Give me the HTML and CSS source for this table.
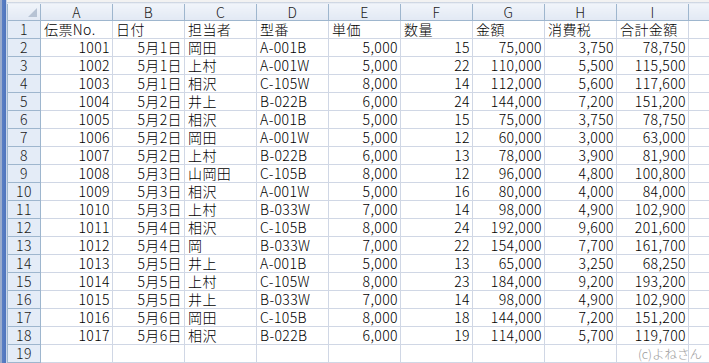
FILE: index.html
```html
<!DOCTYPE html>
<html lang="ja">
<head>
<meta charset="utf-8">
<link rel="stylesheet" href="styles.css">
</head>
<body>
<div class="window">
  <div class="edge"></div>
  <div class="main">
    <div class="topline"></div>
    <table class="sheet">
      <colgroup>
        <col class="c-rh"><col class="c"><col class="c"><col class="c"><col class="c"><col class="c"><col class="c"><col class="c"><col class="c"><col class="c"><col class="c-j">
      </colgroup>
      <thead>
        <tr class="colhead">
          <th class="corner"><span class="tri"></span></th>
          <th>A</th><th>B</th><th>C</th><th>D</th><th>E</th><th>F</th><th>G</th><th>H</th><th>I</th><th></th>
        </tr>
      </thead>
      <tbody>
        <tr><th>1</th><td>伝票No.</td><td>日付</td><td>担当者</td><td>型番</td><td>単価</td><td>数量</td><td>金額</td><td>消費税</td><td>合計金額</td><td></td></tr>
        <tr><th>2</th><td class="r">1001</td><td class="r">5月1日</td><td>岡田</td><td>A-001B</td><td class="r">5,000</td><td class="r">15</td><td class="r">75,000</td><td class="r">3,750</td><td class="r">78,750</td><td></td></tr>
        <tr><th>3</th><td class="r">1002</td><td class="r">5月1日</td><td>上村</td><td>A-001W</td><td class="r">5,000</td><td class="r">22</td><td class="r">110,000</td><td class="r">5,500</td><td class="r">115,500</td><td></td></tr>
        <tr><th>4</th><td class="r">1003</td><td class="r">5月1日</td><td>相沢</td><td>C-105W</td><td class="r">8,000</td><td class="r">14</td><td class="r">112,000</td><td class="r">5,600</td><td class="r">117,600</td><td></td></tr>
        <tr><th>5</th><td class="r">1004</td><td class="r">5月2日</td><td>井上</td><td>B-022B</td><td class="r">6,000</td><td class="r">24</td><td class="r">144,000</td><td class="r">7,200</td><td class="r">151,200</td><td></td></tr>
        <tr><th>6</th><td class="r">1005</td><td class="r">5月2日</td><td>相沢</td><td>A-001B</td><td class="r">5,000</td><td class="r">15</td><td class="r">75,000</td><td class="r">3,750</td><td class="r">78,750</td><td></td></tr>
        <tr><th>7</th><td class="r">1006</td><td class="r">5月2日</td><td>岡田</td><td>A-001W</td><td class="r">5,000</td><td class="r">12</td><td class="r">60,000</td><td class="r">3,000</td><td class="r">63,000</td><td></td></tr>
        <tr><th>8</th><td class="r">1007</td><td class="r">5月2日</td><td>上村</td><td>B-022B</td><td class="r">6,000</td><td class="r">13</td><td class="r">78,000</td><td class="r">3,900</td><td class="r">81,900</td><td></td></tr>
        <tr><th>9</th><td class="r">1008</td><td class="r">5月3日</td><td>山岡田</td><td>C-105B</td><td class="r">8,000</td><td class="r">12</td><td class="r">96,000</td><td class="r">4,800</td><td class="r">100,800</td><td></td></tr>
        <tr><th>10</th><td class="r">1009</td><td class="r">5月3日</td><td>相沢</td><td>A-001W</td><td class="r">5,000</td><td class="r">16</td><td class="r">80,000</td><td class="r">4,000</td><td class="r">84,000</td><td></td></tr>
        <tr><th>11</th><td class="r">1010</td><td class="r">5月3日</td><td>上村</td><td>B-033W</td><td class="r">7,000</td><td class="r">14</td><td class="r">98,000</td><td class="r">4,900</td><td class="r">102,900</td><td></td></tr>
        <tr><th>12</th><td class="r">1011</td><td class="r">5月4日</td><td>相沢</td><td>C-105B</td><td class="r">8,000</td><td class="r">24</td><td class="r">192,000</td><td class="r">9,600</td><td class="r">201,600</td><td></td></tr>
        <tr><th>13</th><td class="r">1012</td><td class="r">5月4日</td><td>岡</td><td>B-033W</td><td class="r">7,000</td><td class="r">22</td><td class="r">154,000</td><td class="r">7,700</td><td class="r">161,700</td><td></td></tr>
        <tr><th>14</th><td class="r">1013</td><td class="r">5月5日</td><td>井上</td><td>A-001B</td><td class="r">5,000</td><td class="r">13</td><td class="r">65,000</td><td class="r">3,250</td><td class="r">68,250</td><td></td></tr>
        <tr><th>15</th><td class="r">1014</td><td class="r">5月5日</td><td>上村</td><td>C-105W</td><td class="r">8,000</td><td class="r">23</td><td class="r">184,000</td><td class="r">9,200</td><td class="r">193,200</td><td></td></tr>
        <tr><th>16</th><td class="r">1015</td><td class="r">5月5日</td><td>井上</td><td>B-033W</td><td class="r">7,000</td><td class="r">14</td><td class="r">98,000</td><td class="r">4,900</td><td class="r">102,900</td><td></td></tr>
        <tr><th>17</th><td class="r">1016</td><td class="r">5月6日</td><td>岡田</td><td>C-105B</td><td class="r">8,000</td><td class="r">18</td><td class="r">144,000</td><td class="r">7,200</td><td class="r">151,200</td><td></td></tr>
        <tr><th>18</th><td class="r">1017</td><td class="r">5月6日</td><td>相沢</td><td>B-022B</td><td class="r">6,000</td><td class="r">19</td><td class="r">114,000</td><td class="r">5,700</td><td class="r">119,700</td><td></td></tr>
        <tr class="last"><th>19</th><td></td><td></td><td></td><td></td><td></td><td></td><td></td><td></td><td></td><td></td></tr>
      </tbody>
    </table>
    <div class="credit">(c)よねさん</div>
  </div>
</div>
</body>
</html>
```

FILE: styles.css
```css
html, body {
  margin: 0;
  padding: 0;
  background: #ffffff;
  overflow: hidden;
}
.window {
  display: flex;
  width: 709px;
  height: 363px;
  overflow: hidden;
}
.edge {
  flex: 0 0 7px;
  background: linear-gradient(to right, #9aaccc 0, #9aaccc 2px, #5a7fc4 2px, #4f75bd 6px, #c9d6ea 6px);
}
.main {
  position: relative;
  flex: 1;
  overflow: hidden;
}
.topline {
  height: 4px;
  background: linear-gradient(to bottom, #f2f2f2 0, #f2f2f2 2px, #b8c3d3 2px, #e7ecf4 3px);
}
.sheet {
  border-collapse: collapse;
  table-layout: fixed;
  width: 735px;
  font-family: "Noto Sans CJK JP", "Noto Sans", sans-serif;
  font-weight: 300;
  font-size: 14px;
  letter-spacing: 0.4px;
  color: #000;
}
.c-rh { width: 33px; }
.c { width: 72px; }
.c-j { width: 54px; }
.sheet th, .sheet td {
  height: 17px;
  padding: 0 3px;
  line-height: 17px;
  white-space: nowrap;
}
.sheet td {
  border: 1px solid #d0d7e5;
  text-align: left;
  overflow: hidden;
}
.sheet td.r { text-align: right; padding-right: 2px; }
.sheet th {
  font-weight: 300;
  background: #e4ecf7;
  border: 1px solid #9eb6ce;
  text-align: center;
  color: #1a1a1a;
  overflow: visible;
}
.colhead th {
  height: 16px;
  line-height: 16px;
  border-top: none;
  background: linear-gradient(to bottom, #f0f4fa, #e2e9f4);
}
.corner {
  position: relative;
}
.tri {
  position: absolute;
  right: 3px;
  bottom: 3px;
  width: 0;
  height: 0;
  border-left: 9px solid transparent;
  border-bottom: 9px solid #b7c3d4;
}
.credit {
  position: absolute;
  right: 7px;
  bottom: 1px;
  font-family: "Noto Sans CJK JP", sans-serif;
  font-weight: 300;
  font-size: 12.5px;
  line-height: 16px;
  color: #9a9a9a;
}
```
